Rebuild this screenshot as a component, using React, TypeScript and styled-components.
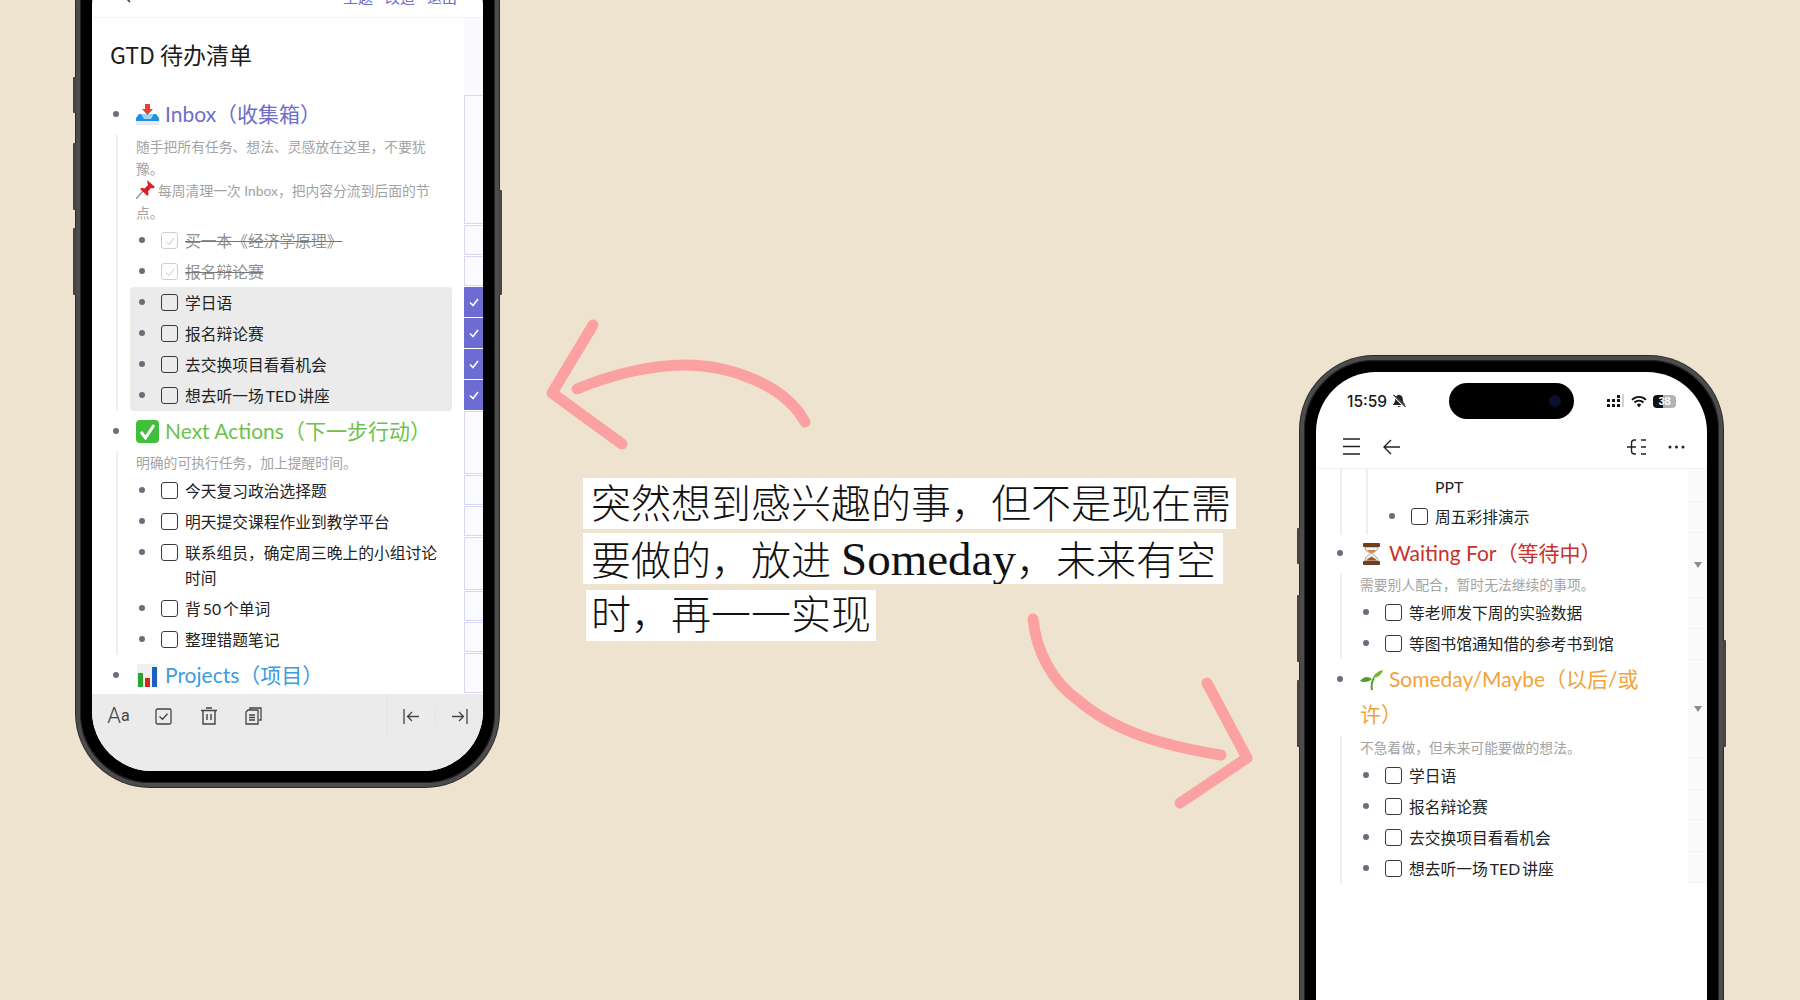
import React from "react";
import styled, { createGlobalStyle } from "styled-components";

const GlobalStyle = createGlobalStyle`
  html, body { margin: 0; padding: 0; background: #eee3cf; }
  * { box-sizing: border-box; }
`;

const UI_FONT = `Lato, "Noto Sans CJK SC", "Noto Sans", sans-serif`;

const Canvas = styled.div`
  position: relative;
  width: 1800px;
  height: 1000px;
  overflow: hidden;
  background: #eee3cf;
  font-family: ${UI_FONT};
  color: #222;
`;

const Phone = styled.div<{ $left: number; $top: number }>`
  position: absolute;
  left: ${(p) => p.$left}px;
  top: ${(p) => p.$top}px;
  width: 423px;
  height: 857px;
  padding: 12px;
  border: 4px solid #4c4c4c;
  border-radius: 74px;
  background: #000;
  box-shadow: inset 0 0 0 1px #222, 0 0 0 1px #2a2a2a;
`;

const SideKey = styled.div<{ $side: "left" | "right"; $top: number; $height: number }>`
  position: absolute;
  ${(p) => p.$side}: -7px;
  top: ${(p) => p.$top}px;
  width: 3px;
  height: ${(p) => p.$height}px;
  background: #444;
  border-radius: 1px;
`;

const Screen = styled.div`
  display: flex;
  flex-direction: column;
  height: 100%;
  overflow: hidden;
  border-radius: 60px;
  background: #fff;
`;

/* left phone top bar */
const EditBar = styled.div`
  flex: none;
  position: relative;
  display: flex;
  align-items: flex-end;
  justify-content: space-between;
  height: 72px;
  padding: 0 26px 10px 30px;
  border-bottom: 1px solid #f4f4f4;
`;

const EditActions = styled.div`
  display: flex;
  gap: 12px;
  font-size: 15px;
  line-height: 20px;
  color: #6f6fc8;
`;

const Body = styled.div`
  flex: 1;
  display: flex;
  min-height: 0;
  overflow: hidden;
`;

const Main = styled.div`
  width: 372px;
  flex: none;
  padding-right: 12px;
`;

const Title = styled.div`
  margin: 19px 0 25px 18px;
  font-family: "Noto Sans CJK SC", sans-serif;
  font-size: 23px;
  line-height: 34px;
  color: #1c1c1c;
`;

const Heading = styled.div<{ $color: string }>`
  display: flex;
  padding: 0 0 1px 21px;
  font-size: 21px;
  line-height: 35px;
  white-space: nowrap;
  color: ${(p) => p.$color};
`;

const HeadBullet = styled.i`
  flex: none;
  width: 6px;
  height: 6px;
  margin: 15px 17px 0 0;
  border-radius: 50%;
  background: #6c6c7c;
`;

const EmojiSlot = styled.span`
  display: inline-block;
  width: 23px;
  height: 23px;
  margin-right: 6px;
  vertical-align: -4px;
  svg { display: block; }
`;

const Children = styled.div<{ $top?: number }>`
  margin: ${(p) => p.$top ?? 2}px 0 2px 24px;
  padding-left: 18px;
  border-left: 2px solid #eeeeee;
`;

const NestedChildren = styled.div`
  margin-left: 6px;
  padding: 5px 0 3px 18px;
  border-left: 2px solid #eeeeee;
`;

const OuterGuide = styled.div`
  margin-left: 24px;
  padding-left: 18px;
  border-left: 2px solid #eeeeee;
`;

const Note = styled.div`
  padding: 1px 0;
  font-size: 13.8px;
  line-height: 22px;
  color: #a3a3a3;
  white-space: nowrap;
`;

const PinSlot = styled.span`
  display: inline-block;
  width: 19px;
  height: 19px;
  margin-right: 3px;
  vertical-align: -3px;
  svg { display: block; }
`;

const Row = styled.div`
  display: flex;
  align-items: flex-start;
  min-height: 31px;
  padding-left: 3px;
`;

const Bullet = styled.i`
  flex: none;
  width: 6px;
  height: 6px;
  margin: 12px 16px 0 0;
  border-radius: 50%;
  background: #6c6c7c;
`;

const Checkbox = styled.span<{ $done?: boolean }>`
  flex: none;
  display: flex;
  align-items: center;
  justify-content: center;
  width: 17px;
  height: 17px;
  margin: 7px 7px 0 0;
  border: 1.5px solid ${(p) => (p.$done ? "#cfcfcf" : "#3a3a3a")};
  border-radius: 3px;
`;

const Label = styled.span<{ $done?: boolean }>`
  padding: 3px 0;
  font-size: 15.75px;
  line-height: 25px;
  word-spacing: -2px;
  white-space: nowrap;
  color: ${(p) => (p.$done ? "#8f8f8f" : "#222")};
  text-decoration: ${(p) => (p.$done ? "line-through" : "none")};
  text-decoration-color: #777;
`;

const PlainLine = styled.div`
  height: 27px;
  padding-left: 49px;
  font-size: 15.75px;
  line-height: 25px;
  color: #222;
`;

const Selection = styled.div`
  margin-left: -6px;
  padding-left: 6px;
  border-radius: 4px;
  background: #ebebeb;
`;

/* right hand strip of the outline */
const Strip = styled.div`
  flex: 1;
  display: flex;
  flex-direction: column;
`;

const StripHead = styled.div`
  flex: none;
  height: 77px;
  background: #fafafc;
`;

const PickCell = styled.div<{ $h: number; $on?: boolean }>`
  flex: none;
  display: flex;
  align-items: center;
  justify-content: center;
  height: ${(p) => p.$h}px;
  margin-bottom: 1px;
  border: 1px solid ${(p) => (p.$on ? "#6c6cd2" : "#d6d6f6")};
  border-right: 0;
  background: ${(p) => (p.$on ? "#6c6cd2" : "#fbfbff")};
`;

const PlainCell = styled.div<{ $h: number }>`
  flex: none;
  display: flex;
  align-items: center;
  justify-content: center;
  height: ${(p) => p.$h}px;
  border-bottom: 1px solid #f3f3f3;
  background: #fafafa;
`;

const Fold = styled.i`
  width: 0;
  height: 0;
  border-left: 4.5px solid transparent;
  border-right: 4.5px solid transparent;
  border-top: 6px solid #8b8b98;
`;

/* left phone bottom toolbar */
const Toolbar = styled.div`
  flex: none;
  display: flex;
  align-items: flex-start;
  height: 77px;
  padding-left: 4px;
  background: #ebebeb;
  color: #444;
`;

const ToolButton = styled.div<{ $w?: number }>`
  display: flex;
  align-items: center;
  justify-content: center;
  width: ${(p) => p.$w ?? 45}px;
  height: 44px;
`;

const ToolRight = styled.div`
  display: flex;
  align-items: center;
  margin-left: auto;
  border-left: 1px solid #e2e2e2;
`;

const ToolDivider = styled.i`
  width: 1px;
  height: 22px;
  background: #e2e2e2;
`;

const BigA = styled.span`
  font-family: Roboto, sans-serif;
  font-weight: 300;
  font-size: 22px;
  line-height: 22px;
`;

const SmallA = styled.span`
  font-family: Roboto, sans-serif;
  font-size: 16px;
  line-height: 22px;
`;

/* right phone status + nav */
const StatusBar = styled.div`
  flex: none;
  display: grid;
  grid-template-columns: 133px 125px 1fr;
  height: 58px;
  padding-top: 11px;
`;

const StatusLeft = styled.div`
  display: flex;
  align-items: center;
  gap: 5px;
  height: 36px;
  padding-left: 31px;
  font-family: Inter, "Liberation Sans", sans-serif;
  font-size: 15.5px;
  font-weight: 500;
  color: #1a1a1a;
`;

const Island = styled.div`
  display: flex;
  align-items: center;
  justify-content: flex-end;
  height: 36px;
  padding-right: 13px;
  border-radius: 18px;
  background: #000;
`;

const Lens = styled.i`
  width: 12px;
  height: 12px;
  border-radius: 50%;
  background: #0c1030;
`;

const StatusRight = styled.div`
  display: flex;
  align-items: center;
  gap: 6px;
  height: 36px;
  padding-left: 33px;
`;

const Battery = styled.div`
  position: relative;
  width: 23px;
  height: 13px;
  border-radius: 4px;
  background: linear-gradient(90deg, #111 0 42%, #b4b4b4 42% 100%);
  color: #fff;
  font-family: "Liberation Sans", sans-serif;
  font-size: 11px;
  font-weight: 700;
  line-height: 13px;
  text-align: center;
`;

const NavBar = styled.div`
  flex: none;
  display: flex;
  align-items: center;
  height: 39px;
  padding: 0 22px 5px 27px;
  border-bottom: 1px solid #f2f2f2;
`;

const NavGroup = styled.div<{ $gap: number; $end?: boolean }>`
  display: flex;
  align-items: center;
  gap: ${(p) => p.$gap}px;
  margin-left: ${(p) => (p.$end ? "auto" : "0")};
`;

/* hand drawn arrows and caption */
const Arrows = styled.svg`
  position: absolute;
  left: 0;
  top: 0;
`;

const Caption = styled.div`
  position: absolute;
  left: 583px;
  top: 478px;
  display: flex;
  flex-direction: column;
  align-items: flex-start;
  font-family: "Liberation Serif", "Noto Sans CJK SC", serif;
  font-size: 40px;
  font-weight: 300;
  line-height: 51px;
  color: #111;
  white-space: nowrap;
`;

const CaptionLine = styled.span<{ $gap: number; $indent: number; $pad: number; $w: number; $pt: number }>`
  width: ${(p) => p.$w}px;
  height: 51px;
  margin-top: ${(p) => p.$gap}px;
  margin-left: ${(p) => p.$indent}px;
  padding: ${(p) => p.$pt}px 0 0 ${(p) => p.$pad}px;
  background: #fff;
  overflow: hidden;
`;

const CaptionLatin = styled.span`
  font-size: 47px;
  line-height: 40px;
`;

/* ---------- drawings ---------- */

const InboxEmoji = () => (
  <svg width="23" height="23" viewBox="0 0 23 23">
    <path d="M0 15h23v7H0z" fill="#e9e9ec" />
    <path d="M0 15l3-4h4l2 3h5l2-3h4l3 4v3H0z" fill="#1f8fe0" />
    <path d="M5 11h13l-3 5H8z" fill="#9fd3f2" />
    <path d="M9 1h5v5h3l-5.500 6L6 6h3z" fill="#e8412f" />
  </svg>
);

const CheckEmoji = () => (
  <svg width="23" height="23" viewBox="0 0 23 23">
    <rect width="23" height="23" rx="4" fill="#3fbf3a" />
    <path d="M5 12l4.500 6L18 5" fill="none" stroke="#fff" strokeWidth="3" />
  </svg>
);

const ChartEmoji = () => (
  <svg width="23" height="23" viewBox="0 0 23 23">
    <rect x="1" width="21" height="23" fill="#eef0f2" />
    <rect x="2" y="9" width="5" height="14" fill="#2aa52e" />
    <rect x="9" y="14" width="5" height="9" fill="#d8261f" />
    <rect x="16" y="3" width="5" height="20" fill="#1f5fc4" />
  </svg>
);

const HourglassEmoji = () => (
  <svg width="23" height="23" viewBox="0 0 23 23">
    <path d="M5 5c0 5 5 5 5 6.500S5 14 5 19h13c0-5-5-5-5-7.500S18 10 18 5z" fill="#eef0f2" stroke="#a99" />
    <path d="M7 8h9c-1 2-4 2.500-4.500 4C11 10.500 8 10 7 8z" fill="#c98a4b" />
    <path d="M6.500 18.500c1-2.500 4-3 5-4 1 1 4 1.500 5 4z" fill="#9a5b28" />
    <rect x="3" y="1" width="17" height="4" rx="1" fill="#6b3f22" />
    <rect x="3" y="19" width="17" height="4" rx="1" fill="#6b3f22" />
  </svg>
);

const SeedlingEmoji = () => (
  <svg width="23" height="23" viewBox="0 0 23 23">
    <path d="M12 22c-1-5 0-9 2-12" fill="none" stroke="#4f9e2a" strokeWidth="2" />
    <path d="M0 13c4-5 8-5 12-2-3 3-8 4-12 2z" fill="#4f9e2a" />
    <path d="M13 10c1-4 5-7 10-8-1 4-5 8-10 8z" fill="#78b82a" />
  </svg>
);

const PinEmoji = () => (
  <svg width="19" height="19" viewBox="0 0 19 19">
    <path d="M0 19l7-8" stroke="#9a9aa2" strokeWidth="1.500" />
    <path d="M11 0l8 7-2 1.500-2-.5-3 3.500c1 2 .5 3.500-.5 4.500L4 9c1-1 3-1.500 4.500-.5L12 5l-.5-2z" fill="#d8232a" />
  </svg>
);

const Tick = ({ color, size, width }: { color: string; size: number; width: number }) => (
  <svg width={size} height={size} viewBox="0 0 12 12">
    <path d="M2 6.500l3 3L10 3" fill="none" stroke={color} strokeWidth={width} />
  </svg>
);

const BackChevron = () => (
  <svg width="10" height="14" viewBox="0 0 10 14" style={{ marginBottom: 4 }}>
    <path d="M8 1L2 7l6 6" fill="none" stroke="#333" strokeWidth="1.500" />
  </svg>
);

const ToolCheck = () => (
  <svg width="17" height="17" viewBox="0 0 17 17" fill="none" stroke="#444" strokeWidth="1.300">
    <rect x="1" y="1" width="15" height="15" rx="1.500" />
    <path d="M4.500 8.500l3 2.800 5-5.500" />
  </svg>
);

const ToolTrash = () => (
  <svg width="18" height="18" viewBox="0 0 18 18" fill="none" stroke="#444" strokeWidth="1.400">
    <path d="M1 3.500h16M6 1h6M3 3.500V17h12V3.500M7 7v6M11 7v6" />
  </svg>
);

const ToolCopy = () => (
  <svg width="17" height="18" viewBox="0 0 17 18" fill="none" stroke="#444" strokeWidth="1.300">
    <path d="M5 3V1h11v12h-2" />
    <path d="M3 3h10v14H1V5z" />
    <path d="M4 8h6M4 10.500h6M4 13h6" />
  </svg>
);

const ToolOutdent = () => (
  <svg width="17" height="17" viewBox="0 0 17 17" fill="none" stroke="#444" strokeWidth="1.300">
    <path d="M1 1v15M16 8.500H5M9 4L4.500 8.500 9 13" />
  </svg>
);

const ToolIndent = () => (
  <svg width="17" height="17" viewBox="0 0 17 17" fill="none" stroke="#444" strokeWidth="1.300">
    <path d="M16 1v15M1 8.500h11M8 4l4.500 4.500L8 13" />
  </svg>
);

const BellOff = () => (
  <svg width="14" height="14" viewBox="0 0 14 14">
    <path d="M7 1c-2.500 0-3.800 1.800-3.800 4.200 0 2.600-1 3.700-2 4.800v1h11.600v-1c-1-1.100-2-2.200-2-4.800C10.800 2.800 9.500 1 7 1z" fill="#222" />
    <path d="M5.500 12.200h3C8.300 13.400 5.700 13.400 5.500 12.200z" fill="#222" />
    <path d="M1 1l12 12" stroke="#fff" strokeWidth="2.200" />
    <path d="M1.500 0.800l12 12" stroke="#222" strokeWidth="1.100" />
  </svg>
);

const SignalDots = () => (
  <svg width="18" height="14" viewBox="0 0 18 14">
    <g fill="#111">
      <rect x="0" y="5" width="3" height="3" rx=".6" />
      <rect x="0" y="10" width="3" height="3" rx=".6" />
      <rect x="5" y="5" width="3" height="3" rx=".6" />
      <rect x="5" y="10" width="3" height="3" rx=".6" />
      <rect x="10" y="1" width="3" height="3" rx=".6" />
      <rect x="10" y="5" width="3" height="3" rx=".6" />
      <rect x="10" y="10" width="3" height="3" rx=".6" />
    </g>
    <rect x="15" y="0" width="2" height="13" rx=".8" fill="#d2d2d2" />
  </svg>
);

const Wifi = () => (
  <svg width="16" height="13" viewBox="0 0 16 13">
    <path d="M1 4.800a10 10 0 0 1 14 0" fill="none" stroke="#111" strokeWidth="1.800" />
    <path d="M3.500 7.500a6.300 6.300 0 0 1 9 0" fill="none" stroke="#111" strokeWidth="1.800" />
    <path d="M5.800 9.800a3 3 0 0 1 4.400 0L8 12.500z" fill="#111" />
  </svg>
);

const Hamburger = () => (
  <svg width="17" height="17" viewBox="0 0 17 17" stroke="#222" strokeWidth="1.500">
    <path d="M0 1h17M0 8.500h17M0 16h17" />
  </svg>
);

const BackArrow = () => (
  <svg width="17" height="16" viewBox="0 0 17 16" fill="none" stroke="#222" strokeWidth="1.400">
    <path d="M17 8H1M8 1L1 8l7 7" />
  </svg>
);

const OutlineIcon = () => (
  <svg width="20" height="16" viewBox="0 0 20 16" fill="none" stroke="#222" strokeWidth="1.400">
    <path d="M9 1H7.500Q4.500 1 4.500 4v8q0 3 3 3H9M0 8h9M14 1h5M14 8h5M14 15h5" />
  </svg>
);

const MoreDots = () => (
  <svg width="17" height="4" viewBox="0 0 17 4" fill="#222">
    <circle cx="2" cy="2" r="1.500" />
    <circle cx="8.500" cy="2" r="1.500" />
    <circle cx="15" cy="2" r="1.500" />
  </svg>
);

/* ---------- pieces ---------- */

const Task = ({ children, done }: { children: React.ReactNode; done?: boolean }) => (
  <Row>
    <Bullet />
    <Checkbox $done={done}>{done && <Tick color="#c4c4c4" size={12} width={1} />}</Checkbox>
    <Label $done={done}>{children}</Label>
  </Row>
);

const Section = ({ color, emoji, children }: { color: string; emoji: React.ReactNode; children: React.ReactNode }) => (
  <Heading $color={color}>
    <HeadBullet />
    <div>
      <EmojiSlot>{emoji}</EmojiSlot>
      {children}
    </div>
  </Heading>
);

const leftCells = [
  { h: 129 }, { h: 30 }, { h: 30 },
  { h: 30, on: true }, { h: 30, on: true }, { h: 30, on: true }, { h: 30, on: true },
  { h: 63 }, { h: 30 }, { h: 30 }, { h: 53 }, { h: 30 }, { h: 30 }, { h: 40 },
];

const rightCells = [
  { h: 33 }, { h: 31 }, { h: 65, fold: true }, { h: 31 }, { h: 31 },
  { h: 98, fold: true }, { h: 32 }, { h: 30 }, { h: 32 }, { h: 31 },
];

const App = () => {
  return (
    <Canvas>
      <GlobalStyle />

      <Phone $left={76} $top={-70}>
        <SideKey $side="left" $top={143} $height={36} />
        <SideKey $side="left" $top={209} $height={67} />
        <SideKey $side="left" $top={294} $height={67} />
        <SideKey $side="right" $top={256} $height={105} />
        <Screen>
          <EditBar>
            <BackChevron />
            <EditActions>
              <span>主题</span>
              <span>改造</span>
              <span>退出</span>
            </EditActions>
          </EditBar>
          <Body>
            <Main>
              <Title>GTD 待办清单</Title>
              <Section color="#6e6ec8" emoji={<InboxEmoji />}>Inbox（收集箱）</Section>
              <Children $top={3}>
                <Note>
                  随手把所有任务、想法、灵感放在这里，不要犹
                  <br />
                  豫。
                  <br />
                  <PinSlot><PinEmoji /></PinSlot>
                  每周清理一次 Inbox，把内容分流到后面的节
                  <br />
                  点。
                </Note>
                <Task done>买一本《经济学原理》</Task>
                <Task done>报名辩论赛</Task>
                <Selection>
                  <Task>学日语</Task>
                  <Task>报名辩论赛</Task>
                  <Task>去交换项目看看机会</Task>
                  <Task>想去听一场 TED 讲座</Task>
                </Selection>
              </Children>
              <Section color="#6cc24a" emoji={<CheckEmoji />}>Next Actions（下一步行动）</Section>
              <Children>
                <Note>明确的可执行任务，加上提醒时间。</Note>
                <Task>今天复习政治选择题</Task>
                <Task>明天提交课程作业到教学平台</Task>
                <Task>
                  联系组员，确定周三晚上的小组讨论
                  <br />
                  时间
                </Task>
                <Task>背 50 个单词</Task>
                <Task>整理错题笔记</Task>
              </Children>
              <Section color="#3d9be0" emoji={<ChartEmoji />}>Projects（项目）</Section>
            </Main>
            <Strip>
              <StripHead />
              {leftCells.map((c, i) => (
                <PickCell key={i} $h={c.h} $on={c.on}>
                  {c.on && <Tick color="#fff" size={12} width={1.6} />}
                </PickCell>
              ))}
            </Strip>
          </Body>
          <Toolbar>
            <ToolButton>
              <BigA>A</BigA>
              <SmallA>a</SmallA>
            </ToolButton>
            <ToolButton><ToolCheck /></ToolButton>
            <ToolButton><ToolTrash /></ToolButton>
            <ToolButton><ToolCopy /></ToolButton>
            <ToolRight>
              <ToolButton $w={47}><ToolOutdent /></ToolButton>
              <ToolDivider />
              <ToolButton $w={47}><ToolIndent /></ToolButton>
            </ToolRight>
          </Toolbar>
        </Screen>
      </Phone>

      <Phone $left={1300} $top={356}>
        <SideKey $side="left" $top={168} $height={36} />
        <SideKey $side="left" $top={235} $height={67} />
        <SideKey $side="left" $top={320} $height={67} />
        <SideKey $side="right" $top={280} $height={107} />
        <Screen>
          <StatusBar>
            <StatusLeft>
              15:59
              <BellOff />
            </StatusLeft>
            <Island>
              <Lens />
            </Island>
            <StatusRight>
              <SignalDots />
              <Wifi />
              <Battery>38</Battery>
            </StatusRight>
          </StatusBar>
          <NavBar>
            <NavGroup $gap={23}>
              <Hamburger />
              <BackArrow />
            </NavGroup>
            <NavGroup $gap={21} $end>
              <OutlineIcon />
              <MoreDots />
            </NavGroup>
          </NavBar>
          <Body>
            <Main>
              <OuterGuide>
                <NestedChildren>
                  <PlainLine>PPT</PlainLine>
                  <Task>周五彩排演示</Task>
                </NestedChildren>
              </OuterGuide>
              <Section color="#c9302c" emoji={<HourglassEmoji />}>Waiting For（等待中）</Section>
              <Children>
                <Note>需要别人配合，暂时无法继续的事项。</Note>
                <Task>等老师发下周的实验数据</Task>
                <Task>等图书馆通知借的参考书到馆</Task>
              </Children>
              <Section color="#f2a33a" emoji={<SeedlingEmoji />}>
                Someday/Maybe（以后/或
                <br />
                许）
              </Section>
              <Children $top={4}>
                <Note>不急着做，但未来可能要做的想法。</Note>
                <Task>学日语</Task>
                <Task>报名辩论赛</Task>
                <Task>去交换项目看看机会</Task>
                <Task>想去听一场 TED 讲座</Task>
              </Children>
            </Main>
            <Strip>
              {rightCells.map((c, i) => (
                <PlainCell key={i} $h={c.h}>
                  {c.fold && <Fold />}
                </PlainCell>
              ))}
            </Strip>
          </Body>
        </Screen>
      </Phone>

      <Arrows width="1800" height="1000" viewBox="0 0 1800 1000" fill="none" stroke="#fca1a2" strokeWidth="11" strokeLinecap="round" strokeLinejoin="round">
        <path d="M593 325L552 393L622 444" />
        <path d="M577 389C610 375 650 365 685 365C730 365 785 385 805 422" />
        <path d="M1033 619C1036 650 1052 682 1078 700C1115 732 1165 746 1221 755" />
        <path d="M1207 683L1247 758L1180 803" />
      </Arrows>

      <Caption>
        <CaptionLine $gap={0} $indent={0} $pad={8} $w={653} $pt={1}>突然想到感兴趣的事，但不是现在需</CaptionLine>
        <CaptionLine $gap={4} $indent={0} $pad={8} $w={640} $pt={3}>
          要做的，放进 <CaptionLatin>Someday</CaptionLatin>，未来有空
        </CaptionLine>
        <CaptionLine $gap={6} $indent={3} $pad={5} $w={290} $pt={0}>时，再一一实现</CaptionLine>
      </Caption>
    </Canvas>
  );
};

export default App;
